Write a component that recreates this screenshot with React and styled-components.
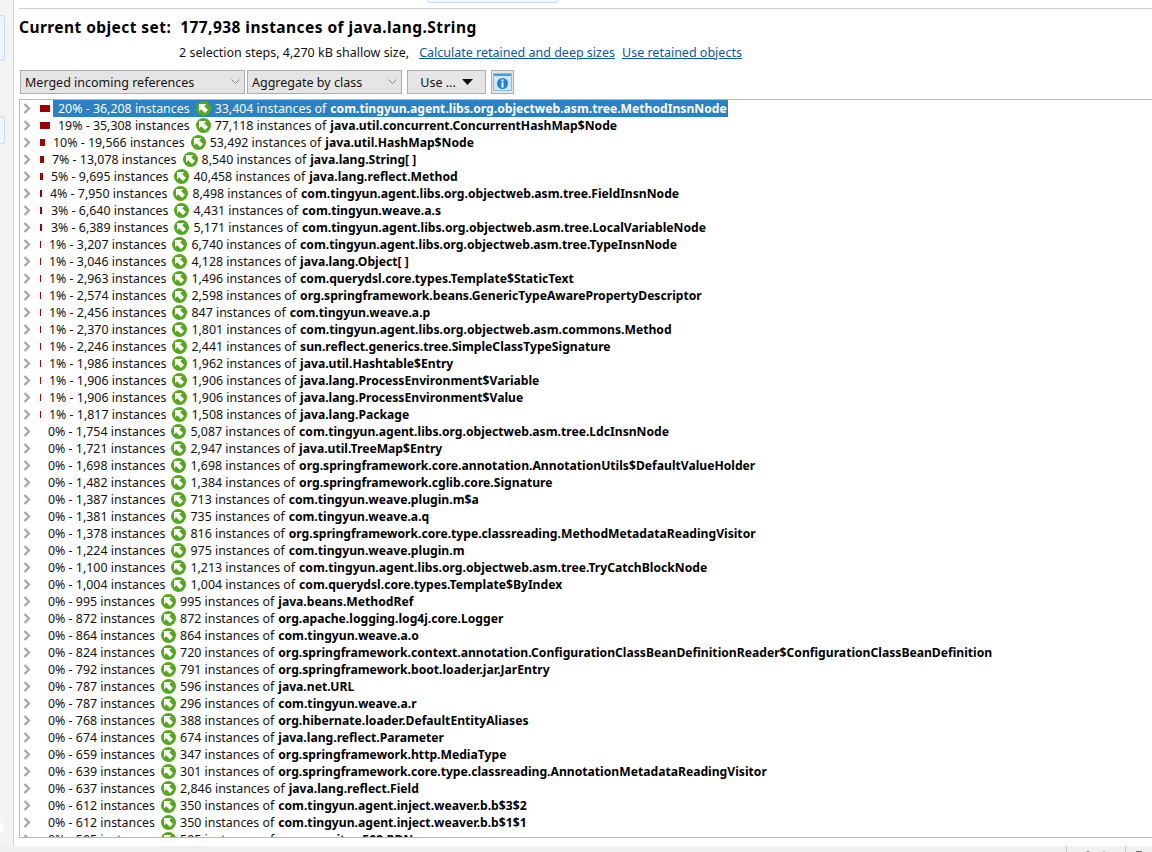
import React from 'react';
import styled, {createGlobalStyle} from 'styled-components';

const GlobalStyle = createGlobalStyle`
  html, body {
    margin: 0;
    height: 100%;
    background: #fff;
    overflow: hidden;
  }
  #root { height: 852px; }
`

const rows = [
  [20, '20% - 36,208 instances', '33,404 instances of', 'com.tingyun.agent.libs.org.objectweb.asm.tree.MethodInsnNode', true],
  [19, '19% - 35,308 instances', '77,118 instances of', 'java.util.concurrent.ConcurrentHashMap$Node'],
  [10, '10% - 19,566 instances', '53,492 instances of', 'java.util.HashMap$Node'],
  [7, '7% - 13,078 instances', '8,540 instances of', 'java.lang.String[ ]'],
  [5, '5% - 9,695 instances', '40,458 instances of', 'java.lang.reflect.Method'],
  [4, '4% - 7,950 instances', '8,498 instances of', 'com.tingyun.agent.libs.org.objectweb.asm.tree.FieldInsnNode'],
  [3, '3% - 6,640 instances', '4,431 instances of', 'com.tingyun.weave.a.s'],
  [3, '3% - 6,389 instances', '5,171 instances of', 'com.tingyun.agent.libs.org.objectweb.asm.tree.LocalVariableNode'],
  [1, '1% - 3,207 instances', '6,740 instances of', 'com.tingyun.agent.libs.org.objectweb.asm.tree.TypeInsnNode'],
  [1, '1% - 3,046 instances', '4,128 instances of', 'java.lang.Object[ ]'],
  [1, '1% - 2,963 instances', '1,496 instances of', 'com.querydsl.core.types.Template$StaticText'],
  [1, '1% - 2,574 instances', '2,598 instances of', 'org.springframework.beans.GenericTypeAwarePropertyDescriptor'],
  [1, '1% - 2,456 instances', '847 instances of', 'com.tingyun.weave.a.p'],
  [1, '1% - 2,370 instances', '1,801 instances of', 'com.tingyun.agent.libs.org.objectweb.asm.commons.Method'],
  [1, '1% - 2,246 instances', '2,441 instances of', 'sun.reflect.generics.tree.SimpleClassTypeSignature'],
  [1, '1% - 1,986 instances', '1,962 instances of', 'java.util.Hashtable$Entry'],
  [1, '1% - 1,906 instances', '1,906 instances of', 'java.lang.ProcessEnvironment$Variable'],
  [1, '1% - 1,906 instances', '1,906 instances of', 'java.lang.ProcessEnvironment$Value'],
  [1, '1% - 1,817 instances', '1,508 instances of', 'java.lang.Package'],
  [0, '0% - 1,754 instances', '5,087 instances of', 'com.tingyun.agent.libs.org.objectweb.asm.tree.LdcInsnNode'],
  [0, '0% - 1,721 instances', '2,947 instances of', 'java.util.TreeMap$Entry'],
  [0, '0% - 1,698 instances', '1,698 instances of', 'org.springframework.core.annotation.AnnotationUtils$DefaultValueHolder'],
  [0, '0% - 1,482 instances', '1,384 instances of', 'org.springframework.cglib.core.Signature'],
  [0, '0% - 1,387 instances', '713 instances of', 'com.tingyun.weave.plugin.m$a'],
  [0, '0% - 1,381 instances', '735 instances of', 'com.tingyun.weave.a.q'],
  [0, '0% - 1,378 instances', '816 instances of', 'org.springframework.core.type.classreading.MethodMetadataReadingVisitor'],
  [0, '0% - 1,224 instances', '975 instances of', 'com.tingyun.weave.plugin.m'],
  [0, '0% - 1,100 instances', '1,213 instances of', 'com.tingyun.agent.libs.org.objectweb.asm.tree.TryCatchBlockNode'],
  [0, '0% - 1,004 instances', '1,004 instances of', 'com.querydsl.core.types.Template$ByIndex'],
  [0, '0% - 995 instances', '995 instances of', 'java.beans.MethodRef'],
  [0, '0% - 872 instances', '872 instances of', 'org.apache.logging.log4j.core.Logger'],
  [0, '0% - 864 instances', '864 instances of', 'com.tingyun.weave.a.o'],
  [0, '0% - 824 instances', '720 instances of', 'org.springframework.context.annotation.ConfigurationClassBeanDefinitionReader$ConfigurationClassBeanDefinition'],
  [0, '0% - 792 instances', '791 instances of', 'org.springframework.boot.loader.jar.JarEntry'],
  [0, '0% - 787 instances', '596 instances of', 'java.net.URL'],
  [0, '0% - 787 instances', '296 instances of', 'com.tingyun.weave.a.r'],
  [0, '0% - 768 instances', '388 instances of', 'org.hibernate.loader.DefaultEntityAliases'],
  [0, '0% - 674 instances', '674 instances of', 'java.lang.reflect.Parameter'],
  [0, '0% - 659 instances', '347 instances of', 'org.springframework.http.MediaType'],
  [0, '0% - 639 instances', '301 instances of', 'org.springframework.core.type.classreading.AnnotationMetadataReadingVisitor'],
  [0, '0% - 637 instances', '2,846 instances of', 'java.lang.reflect.Field'],
  [0, '0% - 612 instances', '350 instances of', 'com.tingyun.agent.inject.weaver.b.b$3$2'],
  [0, '0% - 612 instances', '350 instances of', 'com.tingyun.agent.inject.weaver.b.b$1$1'],
  [0, '0% - 595 instances', '595 instances of', 'sun.security.x509.RDN'],
]

// bar width and label start for each percentage, as the table draws them
const barWidths = {20: 10, 19: 10, 10: 5, 7: 4, 5: 3, 4: 2, 3: 2, 1: 1, 0: 0}
const labelStarts = {20: 10, 19: 10, 10: 5, 7: 4, 5: 3, 4: 2, 3: 3, 1: 1, 0: 0}

const Page = styled.div`
  width: 1152px;
  height: 852px;
  display: flex;
  flex-direction: column;
  font-family: "Noto Sans", "Open Sans", sans-serif;
  font-size: 12.4px;
  color: #111;
`

const Workspace = styled.div`
  flex: 1;
  min-height: 0;
  display: flex;
`

const SideRail = styled.div`
  width: 13px;
  flex: none;
  background: #f4f4f4;
  border-right: 1px solid #d2d2d2;
  display: flex;
  flex-direction: column;
  gap: 55px;
  padding-top: 15px;
`

const RailTab = styled.div`
  width: 4px;
  height: ${props => props.h}px;
  background: #eef5fb;
  border: 1px solid #c5dbef;
  border-left: none;
  border-radius: 0 3px 3px 0;
`

const RailStub = styled.div`
  width: 3px;
  height: 9px;
  margin-top: auto;
  margin-bottom: 14px;
  background: #fff;
  border-radius: 0 3px 0 0;
`

const Editor = styled.div`
  flex: 1;
  min-width: 0;
  background: #fff;
  display: flex;
  flex-direction: column;
  padding-left: 5px;
`

const TopEdge = styled.div`
  height: 8px;
  flex: none;
  border-bottom: 1px solid #cbcbcb;
  position: relative;
`

const ActiveTab = styled.div`
  position: absolute;
  left: 408px;
  top: -5px;
  width: 130px;
  height: 6px;
  background: #eef5fb;
  border: 1px solid #c5dbef;
  border-radius: 0 0 3px 3px;
`

const Title = styled.h1`
  margin: 0;
  padding-top: 7px;
  height: 27px;
  font-size: 15.5px;
  line-height: 22px;
  font-weight: 700;
  letter-spacing: 0.44px;
  color: #000;
  white-space: pre;
`

const Summary = styled.div`
  display: flex;
  height: 27px;
  padding: 1px 0 0 160px;
  line-height: 18px;
  box-sizing: border-box;
  font-size: 12.5px;
`

const StepInfo = styled.span`
  margin-right: 10px;
`

const DetailLink = styled.a`
  color: #0b57a4;
  text-decoration: underline;
  margin-right: 7px;
`

const Toolbar = styled.div`
  display: flex;
  align-items: center;
  gap: 2px;
  padding: 0 0 0 1px;
  height: 24px;
  flex: none;
  font-size: 12.5px;
`

const Select = styled.div`
  box-sizing: border-box;
  width: ${props => props.w}px;
  height: 24px;
  display: flex;
  align-items: center;
  justify-content: space-between;
  padding: 0 4px;
  background: #e5e5e5;
  border: 1px solid #adadad;
`

const MenuButton = styled.div`
  box-sizing: border-box;
  width: 79px;
  height: 24px;
  margin-left: 3px;
  display: flex;
  align-items: center;
  justify-content: center;
  gap: 6px;
  background: #e5e5e5;
  border: 1px solid #adadad;
`

const InfoButton = styled.div`
  box-sizing: border-box;
  width: 23px;
  height: 24px;
  margin-left: 3px;
  display: flex;
  align-items: center;
  justify-content: center;
  background: #e5e5e5;
  border: 1px solid #adadad;
`

const Tree = styled.div`
  flex: 1;
  min-height: 0;
  margin: 5px 0 8px;
  overflow: hidden;
  border: 1px solid #b8b8b8;
  border-right: none;
`

const Row = styled.div`
  height: 17px;
  display: flex;
  align-items: center;
  white-space: nowrap;
  line-height: 17px;
`

const Twisty = styled.svg`
  width: 8px;
  height: 11px;
  margin-left: 3px;
  flex: none;
`

const ShareSlot = styled.div`
  width: 8px;
  height: 7px;
  margin-left: 9px;
  flex: none;
`

const ShareBar = styled.div`
  height: 7px;
  background: #a00000;
`

const Label = styled.div`
  display: flex;
  align-items: center;
  height: 17px;
  padding: 0 1px 0 ${props => props.pad}px;
  margin-left: ${props => props.offset}px;
  background: ${props => props.selected ? '#2a81c5' : 'transparent'};
  color: ${props => props.selected ? '#fff' : '#111'};
`

const Badge = styled.svg`
  width: 15px;
  height: 15px;
  margin: 0 4px 0 6px;
  flex: none;
`

const ClassName = styled.b`
  font-weight: 700;
  font-size: 12.15px;
  margin-left: 4px;
  color: ${props => props.selected ? '#fff' : '#000'};
`

const StatusBar = styled.div`
  height: 6px;
  flex: none;
  background: #f0f0f0;
  display: flex;
  justify-content: flex-end;
`

const StatusCell = styled.div`
  width: ${props => props.w}px;
  box-sizing: border-box;
  border-left: 1px solid #c9c9c9;
  display: flex;
  align-items: flex-end;
  justify-content: center;
  gap: 14px;
`

const StatusMark = styled.span`
  width: ${props => props.w}px;
  height: 1px;
  background: ${props => props.c};
`

const Caret = () => (
  <svg width="11" height="6" viewBox="0 0 11 6"><path d="M0 0h11L5.5 6z" fill="#111" /></svg>
)

const Chevron = () => (
  <svg width="9" height="6" viewBox="0 0 9 6"><path d="M.5 .5L4.5 4.5L8.5 .5" fill="none" stroke="#888" /></svg>
)

const InfoIcon = () => (
  <svg width="19" height="18" viewBox="0 0 19 18">
    <rect x=".5" y=".5" width="18" height="17" fill="#cfe6f7" stroke="#8fbcdc" />
    <rect x="1" y="1" width="17" height="2" fill="#4b9bd8" />
    <circle cx="9.5" cy="10.5" r="5.5" fill="#1f86d6" />
    <rect x="8.5" y="6.5" width="2" height="2" fill="#fff" />
    <rect x="8.5" y="9.5" width="2" height="5" fill="#fff" />
  </svg>
)

const TreeRow = ({row}) => {
  const [pct, count, instances, name, selected] = row
  return (
    <Row>
      <Twisty viewBox="0 0 8 11"><path d="M1.5 1l4.5 4.5L1.5 10" fill="none" stroke="#a6a6a6" strokeWidth="2.2" /></Twisty>
      <ShareSlot>
        {barWidths[pct] > 0 && <ShareBar style={{width: barWidths[pct]}} />}
      </ShareSlot>
      <Label selected={selected} pad={selected ? 5 : labelStarts[pct]} offset={selected ? 5 : 0}>
        {count}
        <Badge viewBox="0 0 15 15">
          <circle cx="7.5" cy="7.5" r="7.5" fill="#55a81d" />
          <path d="M3 3h7.4L8.2 5.2l3.8 3.8L9 12 5.2 8.2 3 10.4z" fill="#fff" />
        </Badge>
        {instances}
        <ClassName selected={selected}>{name}</ClassName>
      </Label>
    </Row>
  )
}

export default function App() {
  return (
    <Page>
      <GlobalStyle />
      <Workspace>
        <SideRail>
          <RailTab h={44} />
          <RailTab h={26} />
          <RailStub />
        </SideRail>
        <Editor>
          <TopEdge><ActiveTab /></TopEdge>
          <Title>{'Current object set:  177,938 instances of java.lang.String'}</Title>
          <Summary>
            <StepInfo>2 selection steps, 4,270 kB shallow size,</StepInfo>
            <DetailLink>Calculate retained and deep sizes</DetailLink>
            <DetailLink>Use retained objects</DetailLink>
          </Summary>
          <Toolbar>
            <Select w={225}>Merged incoming references <Chevron /></Select>
            <Select w={155}>Aggregate by class <Chevron /></Select>
            <MenuButton>Use ... <Caret /></MenuButton>
            <InfoButton><InfoIcon /></InfoButton>
          </Toolbar>
          <Tree>
            {rows.map((row, i) => <TreeRow key={i} row={row} />)}
          </Tree>
        </Editor>
      </Workspace>
      <StatusBar>
        <StatusCell w={59}>
          <StatusMark w={2} c="#777" />
          <StatusMark w={2} c="#aaa" />
        </StatusCell>
        <StatusCell w={27}>
          <StatusMark w={6} c="#777" />
        </StatusCell>
      </StatusBar>
    </Page>
  )
}
